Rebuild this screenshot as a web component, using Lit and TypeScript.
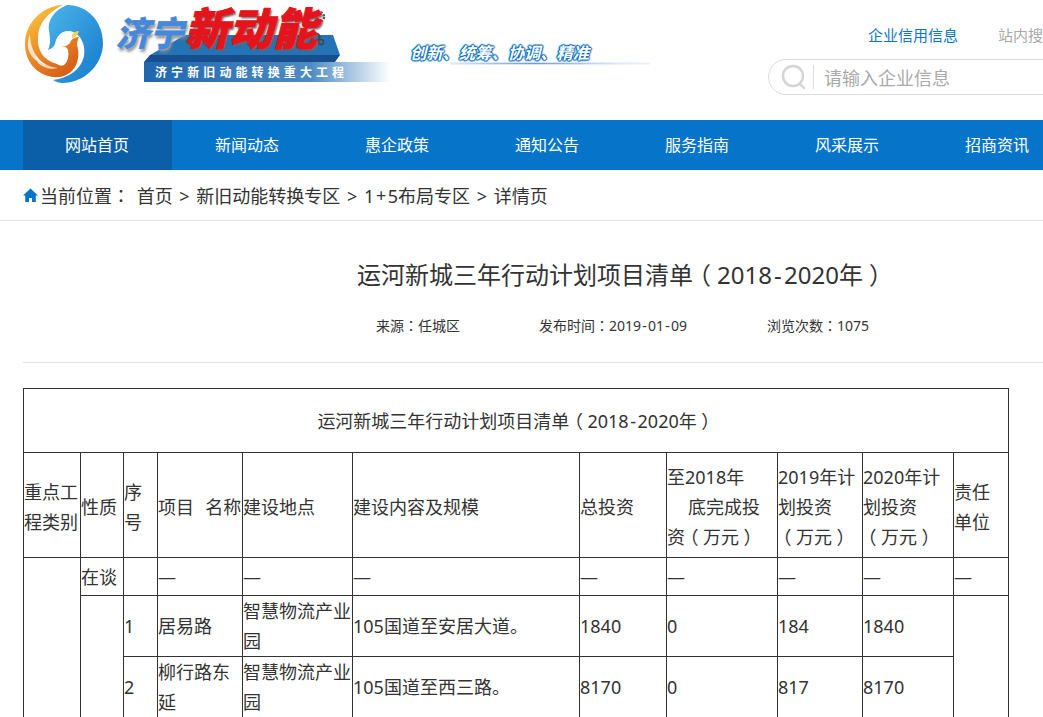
import { LitElement, html, css } from 'lit';
import { customElement } from 'lit/decorators.js';

const NAV = ['网站首页', '新闻动态', '惠企政策', '通知公告', '服务指南', '风采展示', '招商资讯'];
const COLS = [57, 43, 34, 85, 110, 227, 87, 111, 85, 91, 55];

// the reference font centres full-width punctuation and has wider - and +
const t = (s: string) =>
  s.split(/([（）：\-+])/).map((part) =>
    part === '（' || part === '）' ? html`<span class="paren">${part}</span>`
    : part === '：' ? html`<span class="pm">：</span>`
    : part === '-' || part === '+' ? html`<span class="wide">${part}</span>`
    : part
  );

const logo = html`<svg class="logo" viewBox="0 0 80 80" width="80" height="80">
  <defs>
    <linearGradient id="lb" x1="0" y1="0" x2="1" y2="1"><stop offset="0" stop-color="#4cb4ea"/><stop offset="1" stop-color="#1478cc"/></linearGradient>
    <linearGradient id="lo" x1="0" y1="0" x2="0.6" y2="1"><stop offset="0" stop-color="#f9d448"/><stop offset=".45" stop-color="#ee9a2c"/><stop offset="1" stop-color="#d9611a"/></linearGradient>
  </defs>
  <path d="M24 46C27 40 26 33 25 27 23 17 30 6 43 1 64 1 79 18 79 39 79 61 60 79 38 79 35 79 32 78 29 76 44 74 57 66 60 52 62 40 56 29 46 27 36 26 32 34 31 40 30 43 27 45 24 46z" fill="url(#lb)"/>
  <path d="M39 1C18 2 1 19 1 40c0 18 12 31 28 33 10 1 19-3 23-12 3-7 3-14 1-20 0-3 1-6 2-8-4 0-8 2-9 6-2 2-5 4-8 4 4-1 5 1 6 3 1 5 0 11-3 14-2 2-5 2-8 0C19 56 13 46 14 33 14 20 24 8 39 1z" fill="url(#lo)"/>
  <path d="M6 30c0 14 6 24 16 31-7-2-14-6-17-14-2-6-1-12 1-17z" fill="#fff" opacity=".75"/>
  <path d="M12 52c5 7 13 11 22 12-7 2-15 0-20-5-1-2-2-5-2-7z" fill="#fff" opacity=".7"/>
  <path d="M48 31c2-3 4-4 7-4-1 3-3 6-7 7z" fill="#f7d24a"/>
</svg>`;

const brandShapes = html`<svg class="shapes" width="280" height="82" viewBox="0 0 280 82">
  <defs>
    <linearGradient id="rb" x1="0" y1="0" x2="1" y2="0"><stop offset="0" stop-color="#1f66ae"/><stop offset=".68" stop-color="#4e8cc4"/><stop offset="1" stop-color="#fff"/></linearGradient>
  </defs>
  <path d="M70 31H218L225 51H35z" fill="#2473b6"/>
  <path d="M35 51H225L220 58H29z" fill="#174f8e"/>
  <rect x="29" y="58" width="246" height="20" fill="url(#rb)"/>
  <circle cx="204" cy="13" r="5" fill="none" stroke="#555" stroke-width="2.5" stroke-dasharray="2 1.500"/>
  <circle cx="201" cy="33" r="3.500" fill="none" stroke="#444" stroke-width="2"/>
  <circle cx="206" cy="38" r="2.500" fill="none" stroke="#444" stroke-width="1.500"/>
</svg>`;

@customElement('app-root')
export class AppRoot extends LitElement {
  static styles = css`
    :host {
      display: block;
      height: 717px;
      overflow: hidden;
      background: #fff;
      color: #333;
      font-family: "Noto Sans", "Noto Sans CJK SC", sans-serif;
    }
    .page { width: 1043px; overflow: hidden; }
    .paren { font-feature-settings: "halt"; padding: 0 0.25em; }
    .pm { font-family: "Noto Sans CJK TC", sans-serif; }
    .wide { padding: 0 0.09em; }
    .top {
      height: 120px;
      display: flex;
      padding: 4px 0 0 24px;
      box-sizing: border-box;
      position: relative;
    }
    .logo { flex: none; }
    .brand { position: relative; width: 280px; height: 82px; margin-left: 11px; flex: none; }
    .shapes { position: absolute; left: 0; top: 0; }
    .word {
      position: absolute;
      font-weight: 900;
      white-space: nowrap;
      transform: skewX(-14deg);
    }
    .word.city {
      left: 4px;
      top: 7px;
      font-size: 34px;
      line-height: 44px;
      color: #4788d8;
      -webkit-text-stroke: 0.5px #4788d8;
      text-shadow: 0 0 2px #fff, 2px 3px 3px #888;
    }
    .word.fresh {
      left: 74px;
      top: -2px;
      font-size: 44px;
      line-height: 52px;
      color: #e5141c;
      -webkit-text-stroke: 1px #e5141c;
      text-shadow: 2px 2px 2px #666;
    }
    .ribbon {
      position: absolute;
      left: 40px;
      top: 59px;
      height: 20px;
      line-height: 20px;
      font-size: 12px;
      font-weight: 700;
      letter-spacing: 4.1px;
      color: #fff;
      white-space: nowrap;
    }
    .slogan {
      position: absolute;
      left: 410px;
      top: 41px;
      font-size: 16.300px;
      line-height: 24px;
      font-style: italic;
      font-weight: 700;
      color: #fff;
      white-space: nowrap;
      text-shadow: 0 0 2px #0a6cc0, 0 0 2px #0a6cc0, 0 0 2px #0a6cc0, 1px 0 1px #0a6cc0, -1px 0 1px #0a6cc0, 0 1px 1px #0a6cc0, 0 -1px 1px #0a6cc0;
    }
    .slogan-line {
      position: absolute;
      left: 450px;
      top: 62px;
      width: 200px;
      height: 3px;
      background: radial-gradient(ellipse at 42% 50%, #6f94f2 0, #dfe7fb 50%, #ffffff 100%);
    }
    .tabs {
      position: absolute;
      left: 868px;
      top: 25px;
      display: flex;
      gap: 40px;
      font-size: 15px;
      line-height: 20px;
      white-space: nowrap;
    }
    .tabs .on { color: #0a76c8; }
    .tabs .off { color: #aaa; }
    .search {
      position: absolute;
      left: 768px;
      top: 59px;
      width: 320px;
      height: 36px;
      box-sizing: border-box;
      border: 1px solid #dcdcdc;
      border-radius: 18px;
      display: flex;
      align-items: center;
      padding-left: 11px;
      color: #aaa;
      font-size: 18px;
    }
    .search .sep { width: 1px; height: 24px; background: #ddd; margin: 0 10px 0 5px; }
    nav {
      height: 50px;
      background: #0675c9;
      display: flex;
      padding-left: 23px;
      color: #fff;
      font-size: 16px;
      line-height: 50px;
      white-space: nowrap;
    }
    nav a { width: 150px; flex: none; text-align: center; }
    nav a.on { background: #0a5fa8; width: 149px; padding-right: 1px; box-sizing: border-box; }
    .crumb {
      height: 51px;
      box-sizing: border-box;
      border-bottom: 1px solid #e2e2e2;
      display: flex;
      align-items: center;
      padding-left: 23px;
      font-size: 18px;
      word-spacing: 2px;
      white-space: pre;
    }
    .crumb svg { margin-right: 2px; flex: none; }
    .body { padding-left: 23px; }
    h1 {
      margin: 0;
      padding: 36px 0 0 334px;
      font-size: 24px;
      line-height: 36px;
      font-weight: 400;
      white-space: nowrap;
    }
    .meta {
      display: flex;
      margin-top: 22px;
      height: 47px;
      padding-left: 353px;
      font-size: 14px;
      line-height: 20px;
      border-bottom: 1px solid #e2e2e2;
      white-space: nowrap;
    }
    .meta span.cell:nth-child(1) { width: 163px; }
    .meta span.cell:nth-child(2) { width: 228px; }
    table {
      margin-top: 25px;
      border-collapse: collapse;
      table-layout: fixed;
      width: 986px;
      font-size: 18px;
      line-height: 30px;
    }
    td { border: 1px solid #333; padding: 0; vertical-align: middle; word-break: break-all; }
    td.title { text-align: center; height: 63px; }
    .head td { padding-top: 3px; }
    .row td { padding-top: 1px; line-height: 29.500px; }
    .indent { padding-left: 21px; }
    .gap { word-spacing: 1px; white-space: nowrap; }
  `;

  render() {
    return html`<div class="page">
      <div class="top">
        ${logo}
        <div class="brand">
          ${brandShapes}
          <span class="word city">济宁</span>
          <span class="word fresh">新动能</span>
          <div class="ribbon">济宁新旧动能转换重大工程</div>
        </div>
        <div class="slogan">创新、统筹、协调、精准</div>
        <div class="slogan-line"></div>
        <div class="tabs"><span class="on">企业信用信息</span><span class="off">站内搜索</span></div>
        <div class="search">
          <svg width="28" height="28" viewBox="0 0 28 28" fill="none" stroke="#d4d4d4" stroke-width="2.400">
            <circle cx="13" cy="13" r="10"/><path d="M20 21l4 4" stroke-linecap="round"/>
          </svg>
          <span class="sep"></span>请输入企业信息
        </div>
      </div>
      <nav>${NAV.map((n, i) => html`<a class=${i === 0 ? 'on' : ''}>${n}</a>`)}</nav>
      <div class="crumb"><svg width="15" height="14" viewBox="0 0 15 14" fill="#0675c9"><path d="M7.500 0.500L0 7.500h2.200V14H6v-4h3v4h3.800V7.500H15z"/></svg>${t('当前位置： 首页 > 新旧动能转换专区 > 1+5布局专区 > 详情页')}</div>
      <div class="body">
        <h1>${t('运河新城三年行动计划项目清单（2018-2020年）')}</h1>
        <div class="meta">
          <span class="cell">${t('来源：任城区')}</span>
          <span class="cell">${t('发布时间：2019-01-09')}</span>
          <span class="cell">${t('浏览次数：1075')}</span>
        </div>
        <table>
          <colgroup>${COLS.map((w) => html`<col style="width:${w}px" />`)}</colgroup>
          <tr><td class="title" colspan="11">${t('运河新城三年行动计划项目清单（2018-2020年）')}</td></tr>
          <tr class="head" style="height:105px">
            <td>重点工程类别</td><td>性质</td><td>序号</td><td class="gap">项目&nbsp;&nbsp;名称</td><td>建设地点</td><td>建设内容及规模</td><td>总投资</td>
            <td>至2018年<br /><span class="indent">底完成投</span><br />资${t('（万元）')}</td>
            <td>2019年计划投资<br />${t('（万元）')}</td>
            <td>2020年计划投资<br />${t('（万元）')}</td>
            <td>责任<br />单位</td>
          </tr>
          <tr style="height:38px">
            <td rowspan="3"></td><td>在谈</td><td></td><td>—</td><td>—</td><td>—</td><td>—</td><td>—</td><td>—</td><td>—</td><td>—</td>
          </tr>
          <tr class="row" style="height:61px">
            <td rowspan="2"></td><td>1</td><td>居易路</td><td>智慧物流产业园</td><td>105国道至安居大道。</td><td>1840</td><td>0</td><td>184</td><td>1840</td><td rowspan="2"></td>
          </tr>
          <tr class="row" style="height:61px">
            <td>2</td><td>柳行路东延</td><td>智慧物流产业园</td><td>105国道至西三路。</td><td>8170</td><td>0</td><td>817</td><td>8170</td>
          </tr>
        </table>
      </div>
    </div>`;
  }
}
